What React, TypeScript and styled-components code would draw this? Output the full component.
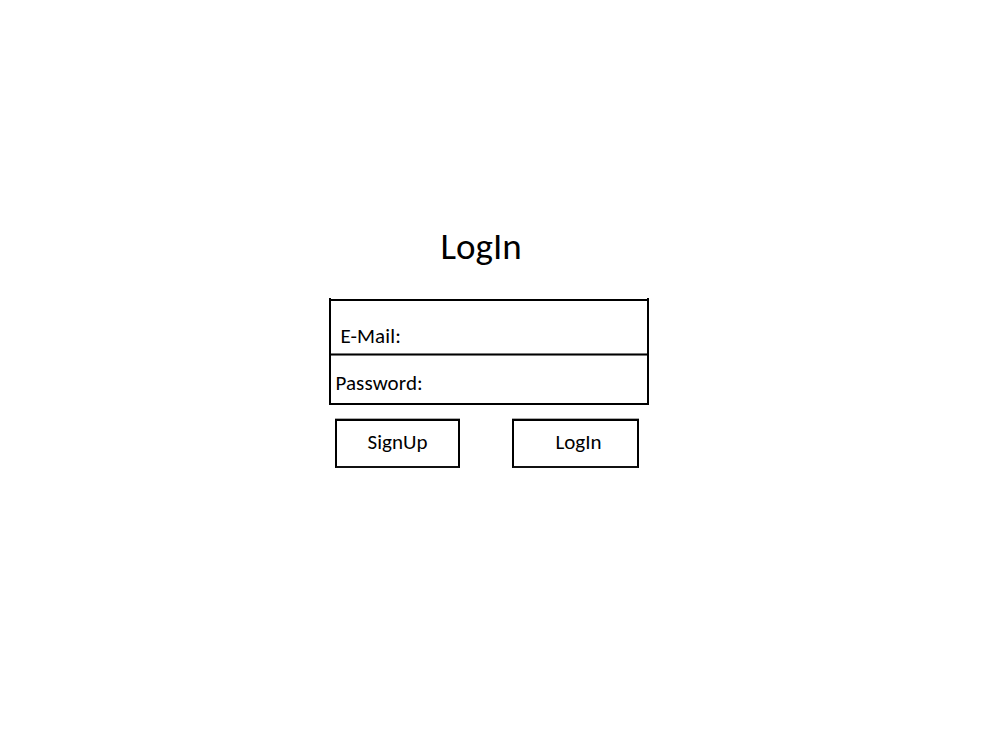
import React from "react";
import styled, { createGlobalStyle } from "styled-components";

const GlobalStyle = createGlobalStyle`
  * { box-sizing: border-box; }
  body { margin: 0; background: #fff; color: #000; font-family: Carlito, Calibri, Lato, sans-serif; }
`;
const Page = styled.main`
  width: 1000px;
  height: 750px;
  padding: 224px 0 0 329px;
`;
const Title = styled.h1`
  margin: 0 0 29px 111.5px;
  height: 45px;
  font-size: 37px;
  font-weight: 400;
  line-height: 45px;
`;
const Fields = styled.div`
  width: 320px;
  height: 107px;
  border: solid #000;
  border-width: 0 2px 2px;
  padding-top: 1px;
`;
const Field = styled.label<{ $height: number; $top: number; $left: number }>`
  display: block;
  height: ${(p) => p.$height}px;
  padding: ${(p) => p.$top}px 0 0 ${(p) => p.$left}px;
  border-top: 2px solid #000;
  font-size: 21px;
  letter-spacing: 0.12px;
  line-height: 24px;
  & + & {
    border-top: 1px solid #000;
    box-shadow: 0 -1px #777, inset 0 1px #777;
  }
`;
const Actions = styled.div`
  display: flex;
  gap: 52px;
  padding: 14px 0 0 6px;
`;
const Button = styled.button<{ $width: number; $shift?: number }>`
  width: ${(p) => p.$width}px;
  height: 49px;
  padding: 0 0 4px ${(p) => p.$shift ?? 0}px;
  border: 2px solid #000;
  border-bottom-color: #111;
  box-shadow: 0 -1px #aaa;
  background: #fff;
  color: #000;
  font: inherit;
  font-size: 21px;
`;

export default function App() {
  return (
    <Page>
      <GlobalStyle />
      <Title>LogIn</Title>
      <Fields>
        <Field $height={55} $top={23} $left={9.4}>E-Mail:</Field>
        <Field $height={49} $top={16} $left={4.4}>Password:</Field>
      </Fields>
      <Actions>
        <Button $width={125}>SignUp</Button>
        <Button $width={127} $shift={6}>LogIn</Button>
      </Actions>
    </Page>
  );
}
